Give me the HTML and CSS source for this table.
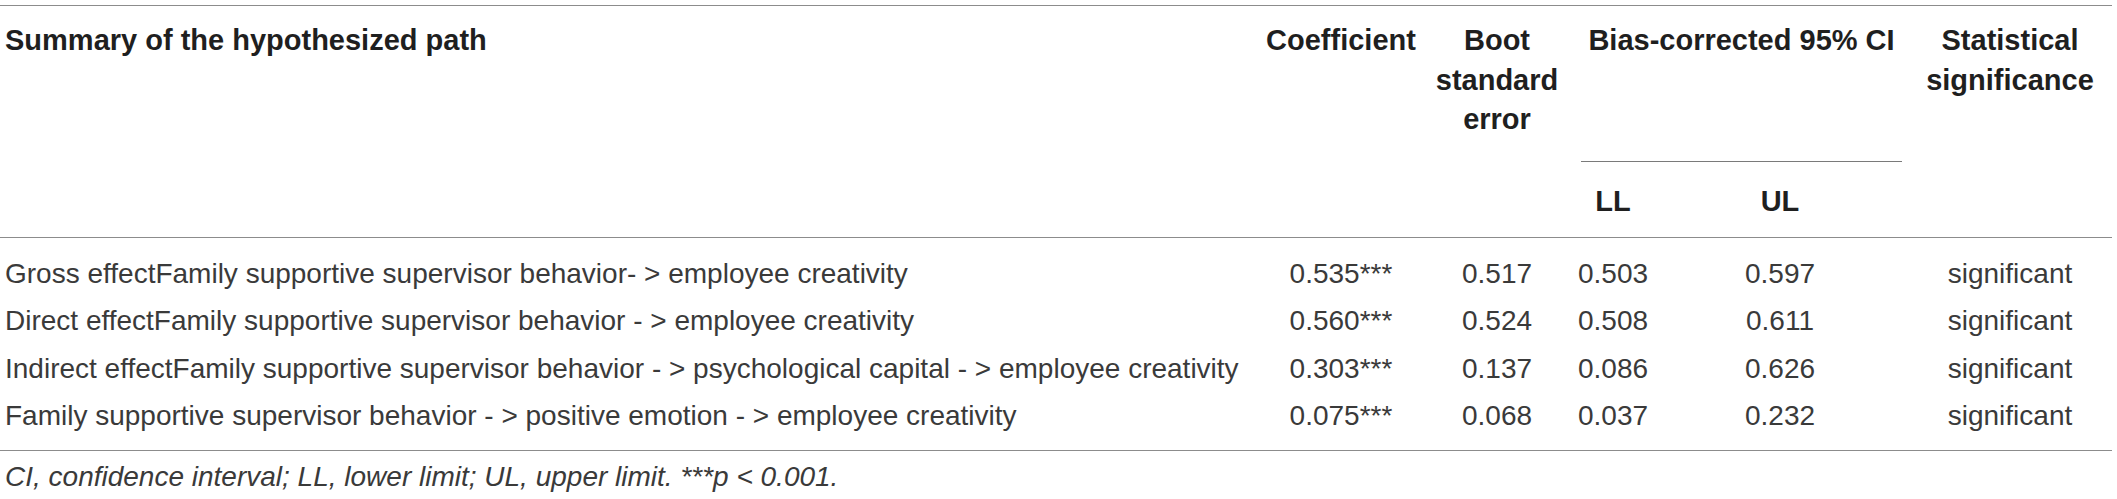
FILE: index.html
```html
<!DOCTYPE html>
<html lang="en">
<head>
<meta charset="utf-8">
<title>Summary of the hypothesized path</title>
<link rel="stylesheet" href="styles.css">
</head>
<body>
<div class="table">
  <div class="thead">
    <div class="th c1 span2">Summary of the hypothesized path</div>
    <div class="th c2 span2 center">Coefficient</div>
    <div class="th c3 span2 center">Boot standard error</div>
    <div class="th bias center">Bias-corrected 95% CI</div>
    <div class="th c6 span2 center">Statistical significance</div>
    <div class="th sub c4 center">LL</div>
    <div class="th sub c5 center">UL</div>
  </div>
  <div class="tbody">
    <div class="row">
      <div class="td c1">Gross effectFamily supportive supervisor behavior- &gt; employee creativity</div>
      <div class="td center">0.535***</div>
      <div class="td center">0.517</div>
      <div class="td center">0.503</div>
      <div class="td center">0.597</div>
      <div class="td center">significant</div>
    </div>
    <div class="row">
      <div class="td c1">Direct effectFamily supportive supervisor behavior - &gt; employee creativity</div>
      <div class="td center">0.560***</div>
      <div class="td center">0.524</div>
      <div class="td center">0.508</div>
      <div class="td center">0.611</div>
      <div class="td center">significant</div>
    </div>
    <div class="row">
      <div class="td c1">Indirect effectFamily supportive supervisor behavior - &gt; psychological capital - &gt; employee creativity</div>
      <div class="td center">0.303***</div>
      <div class="td center">0.137</div>
      <div class="td center">0.086</div>
      <div class="td center">0.626</div>
      <div class="td center">significant</div>
    </div>
    <div class="row">
      <div class="td c1">Family supportive supervisor behavior - &gt; positive emotion - &gt; employee creativity</div>
      <div class="td center">0.075***</div>
      <div class="td center">0.068</div>
      <div class="td center">0.037</div>
      <div class="td center">0.232</div>
      <div class="td center">significant</div>
    </div>
  </div>
  <p class="note">CI, confidence interval; LL, lower limit; UL, upper limit. ***p &lt; 0.001.</p>
</div>
</body>
</html>
```
FILE: styles.css
```css
html, body {
  margin: 0;
  padding: 0;
  background: #ffffff;
}

body {
  font-family: "Liberation Sans", Arial, Helvetica, sans-serif;
  color: #2a2a2a;
}

.table {
  width: 2112px;
  margin-top: 5px;
  --cols: 1262px 158px 154px 78px 256px 204px;
}

.thead {
  display: grid;
  grid-template-columns: var(--cols);
  grid-template-rows: 156px 75px;
  border-top: 1px solid #8c8c8c;
  border-bottom: 1px solid #8c8c8c;
}

.th {
  font-size: 29px;
  font-weight: bold;
  line-height: 39.5px;
  color: #1f1f1f;
  padding-top: 15px;
}

.span2 {
  grid-row: 1 / 3;
}

.c1 {
  grid-column: 1;
  padding-left: 5px;
  white-space: nowrap;
}

.c2 { grid-column: 2; }
.c3 { grid-column: 3; }
.c4 { grid-column: 4; }
.c5 { grid-column: 5; }
.c6 { grid-column: 6; }

.bias {
  grid-column: 4 / 6;
  grid-row: 1;
  margin: 0 6px 0 7px;
  border-bottom: 1px solid #7a7a7a;
  white-space: nowrap;
}

.sub {
  grid-row: 2;
  padding-top: 20px;
}

.center {
  text-align: center;
}

.tbody {
  padding: 12px 0 11px;
  border-bottom: 1px solid #8c8c8c;
}

.row {
  display: grid;
  grid-template-columns: var(--cols);
}

.td {
  font-size: 28px;
  line-height: 47.33px;
  color: #3a3a3a;
  white-space: nowrap;
}

.note {
  margin: 6px 0 0;
  padding-left: 5px;
  font-size: 28px;
  font-style: italic;
  line-height: 40px;
  color: #3a3a3a;
}
```
